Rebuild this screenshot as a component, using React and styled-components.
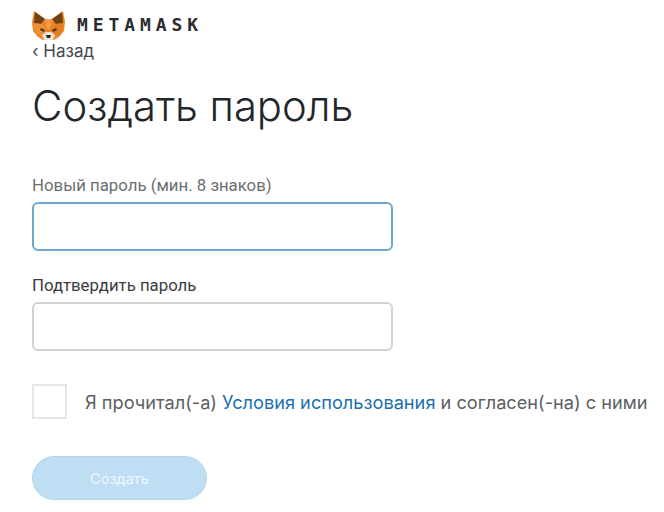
import React from "react";
import styled, { createGlobalStyle } from "styled-components";

const Global = createGlobalStyle`
  html, body {
    margin: 0;
    background: #fff;
    font-family: "Inter", "Liberation Sans", sans-serif;
  }
`;

const Page = styled.div`
  width: 664px;
  height: 512px;
  box-sizing: border-box;
  overflow: hidden;
  padding: 10px 0 0 32px;
`;

const Header = styled.div`
  display: flex;
  align-items: center;
  height: 30px;
`;

const Wordmark = styled.span`
  margin-left: 12px;
  font-family: "DejaVu Sans Mono", monospace;
  font-size: 18px;
  font-weight: 700;
  letter-spacing: 4.9px;
  color: #2a2c30;
  line-height: 1;
`;

const Back = styled.a`
  display: block;
  margin-top: 2px;
  font-size: 17px;
  line-height: 18px;
  color: #44474a;
`;

const Title = styled.h1`
  margin: 23px 0 0;
  font-size: 41.8px;
  line-height: 46px;
  font-weight: 300;
  color: #24272a;
`;

const Field = styled.div`
  display: flex;
  flex-direction: column;
  width: 361px;
  margin-top: ${(p) => p.$top}px;
`;

const Label = styled.label`
  height: 18px;
  margin-bottom: 8px;
  font-family: "Roboto", sans-serif;
  font-size: 16.8px;
  line-height: 18px;
  color: ${(p) => (p.$muted ? "#6a6f74" : "#3a3d40")};
`;

const Input = styled.div`
  box-sizing: border-box;
  height: 49px;
  border-radius: 6px;
  border: 2px solid ${(p) => (p.$focused ? "#6ea8cc" : "#d2d2d2")};
  background: #fff;
`;

const Terms = styled.div`
  display: flex;
  align-items: center;
  margin-top: 33px;
`;

const Checkbox = styled.div`
  box-sizing: border-box;
  width: 35px;
  height: 35px;
  border: 2px solid #e6e6e6;
`;

const TermsText = styled.span`
  margin-left: 18px;
  font-size: 18.2px;
  white-space: nowrap;
  color: #5a5f64;
`;

const TermsLink = styled.a`
  color: #1c6fb0;
`;

const Submit = styled.button`
  display: block;
  width: 175px;
  height: 44px;
  margin-top: 37px;
  border: 1px solid #b5d8f0;
  border-radius: 22px;
  background: #bfdef4;
  color: #eef7fd;
  font-family: inherit;
  font-size: 14.5px;
`;

const Fox = () => (
  <svg width="33" height="30" viewBox="0 0 33 30">
    <path d="M2 1l11 8h7L31 1l2 11-1 9-5 6-5 3H11l-5-3-5-6-1-9z" fill="#ec8428" />
    <path d="M3 2l10 7-4 5-7-1z" fill="#6f4318" />
    <path d="M30 2L20 9l4 5 7-1z" fill="#6f4318" />
    <path d="M13 9h7l-2 10h-3z" fill="#f69a45" />
    <path d="M2 13l7 1 5 5-4 7-4-2-4-6z" fill="#f09035" />
    <path d="M31 13l-7 1-5 5 4 7 4-2 4-6z" fill="#e67c1f" />
    <path d="M9 18l4 2-1 2-4-2z" fill="#4a3420" />
    <path d="M24 18l-4 2 1 2 4-2z" fill="#4a3420" />
    <path d="M10 25l4-3h5l4 3-2 5H12z" fill="#efe4d8" />
    <path d="M14 25h5l-1 3h-3z" fill="#2c2320" />
  </svg>
);

export default function App() {
  return (
    <Page>
      <Global />
      <Header>
        <Fox />
        <Wordmark>METAMASK</Wordmark>
      </Header>
      <Back>‹ Назад</Back>
      <Title>Создать пароль</Title>
      <Field $top={47}>
        <Label $muted>Новый пароль (мин. 8 знаков)</Label>
        <Input $focused />
      </Field>
      <Field $top={25}>
        <Label>Подтвердить пароль</Label>
        <Input />
      </Field>
      <Terms>
        <Checkbox />
        <TermsText>
          Я прочитал(-а) <TermsLink>Условия использования</TermsLink> и согласен(-на) с ними
        </TermsText>
      </Terms>
      <Submit>Создать</Submit>
    </Page>
  );
}
